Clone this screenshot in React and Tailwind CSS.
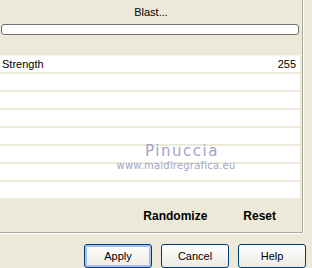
import React from "react";

const rows = [
    { label: "Strength", value: "255" },
    {}, {}, {}, {}, {}, {}, {},
];

function XpButton({ children, isDefault }) {
    return (
        <button
            className={`w-[68px] h-[24px] rounded-[3px] border border-[#003c74] bg-gradient-to-b from-white to-[#ecebe6] text-[11px] text-black ${
                isDefault ? "shadow-[inset_0_0_0_2px_#a6bff0]" : ""
            }`}
        >
            {children}
        </button>
    );
}

export default function App() {
    return (
        <div
            className="relative w-[312px] h-[268px] overflow-hidden bg-[#ece9d8]"
            style={{ fontFamily: '"Liberation Sans", Tahoma, sans-serif' }}
        >
            <div className="w-[304px] h-[234px] border-r border-b border-white">
                <div className="h-full flex flex-col border-r border-b border-[#aca899]">
                    <div className="h-[24px] pt-[6px] text-center text-[11px] leading-[13px] text-black">
                        Blast...
                    </div>
                    <div className="ml-[1px] w-[298px] h-[11px] rounded-[3px] border border-[#6f6f6f] bg-white" />
                    <div className="h-[21px] border-b border-[#f7f6f0]" />
                    <div className="flex flex-col gap-[2px] w-[300px]">
                        {rows.map((row, i) => (
                            <div
                                key={i}
                                className="h-[16px] bg-white flex items-center justify-between pl-[2px] pr-[4px] text-[11px] text-black"
                            >
                                <span>{row.label}</span>
                                <span>{row.value}</span>
                            </div>
                        ))}
                    </div>
                    <div className="flex-1 flex items-center justify-end gap-[36px] pr-[26px] pt-[2px] text-[12px] font-bold text-black">
                        <span>Randomize</span>
                        <span>Reset</span>
                    </div>
                </div>
            </div>
            <div className="flex justify-end gap-[9px] pr-[6px] pt-[10px]">
                <XpButton isDefault>Apply</XpButton>
                <XpButton>Cancel</XpButton>
                <XpButton>Help</XpButton>
            </div>

            <div
                className="absolute left-[114px] top-[143px] w-[124px] flex flex-col items-center text-[#a4a4c8]"
                style={{ fontFamily: '"DejaVu Sans", sans-serif' }}
            >
                <span className="ml-[12px] text-[15px] leading-[17px] tracking-[1.5px]">Pinuccia</span>
                <span className="text-[10px] leading-[11px] tracking-[0.2px]">www.maidiregrafica.eu</span>
            </div>
        </div>
    );
}
